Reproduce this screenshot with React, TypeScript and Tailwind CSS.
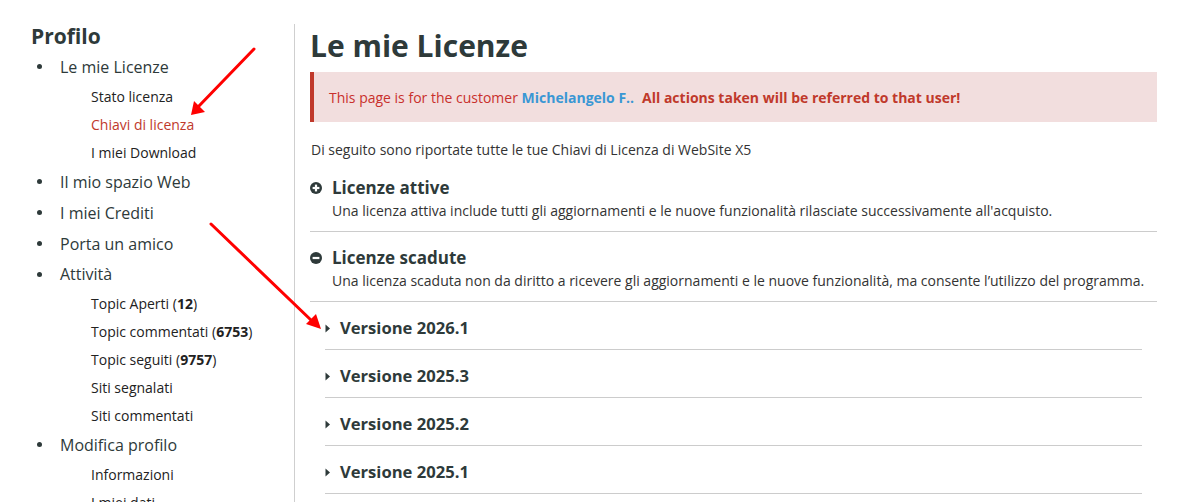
import React from "react";

type SubItem = { label: string; count?: string; active?: boolean };
type NavItem = { label: string; children?: SubItem[] };

const nav: NavItem[] = [
  {
    label: "Le mie Licenze",
    children: [
      { label: "Stato licenza" },
      { label: "Chiavi di licenza", active: true },
      { label: "I miei Download" },
    ],
  },
  { label: "Il mio spazio Web" },
  { label: "I miei Crediti" },
  { label: "Porta un amico" },
  {
    label: "Attività",
    children: [
      { label: "Topic Aperti", count: "12" },
      { label: "Topic commentati", count: "6753" },
      { label: "Topic seguiti", count: "9757" },
      { label: "Siti segnalati" },
      { label: "Siti commentati" },
    ],
  },
  {
    label: "Modifica profilo",
    children: [{ label: "Informazioni" }, { label: "I miei dati" }],
  },
];

const versions = ["Versione 2026.1", "Versione 2025.3", "Versione 2025.2", "Versione 2025.1"];

function CircleIcon({ minus }: { minus?: boolean }) {
  return (
    <svg width="12" height="12" viewBox="0 0 12 12" className="shrink-0">
      <circle cx="6" cy="6" r="6" fill="#2e3a3a" />
      <rect x="2.6" y="4.9" width="6.8" height="2.2" fill="#fff" />
      {!minus && <rect x="4.9" y="2.6" width="2.2" height="6.8" fill="#fff" />}
    </svg>
  );
}

function Caret() {
  return (
    <svg width="6" height="9" viewBox="0 0 6 9" className="shrink-0">
      <path d="M0.5 0.5 L5 4.5 L0.5 8.5 Z" fill="#2e3a3a" />
    </svg>
  );
}

function Sidebar() {
  return (
    <aside className="w-[295px] shrink-0 mt-[24px] border-r border-[#cfcfcf] h-[600px]">
      <h2 className="pl-[31px] h-[24px] leading-[24px] text-[21px] font-bold text-[#2e3a3a]">Profilo</h2>
      <ul className="mt-[3px]">
        {nav.map((item, i) => (
          <li key={item.label}>
            <div className={`flex items-center ${i === 4 ? "h-[30px]" : "h-[31px]"}`}>
              <span className="ml-[37px] w-[5px] h-[5px] rounded-full bg-[#2e3a3a]" />
              <span className="ml-[18px] text-[16px] text-[#2e3a3a]">{item.label}</span>
            </div>
            {item.children && (
              <ul>
                {item.children.map((c) => (
                  <li
                    key={c.label}
                    className={`h-[28px] flex items-center pl-[91px] text-[14px] ${
                      c.active ? "text-[#c0392b]" : "text-[#222]"
                    }`}
                  >
                    <span>
                      {c.label}
                      {c.count && (
                        <>
                          {" ("}
                          <b className="font-bold">{c.count}</b>
                          {")"}
                        </>
                      )}
                    </span>
                  </li>
                ))}
              </ul>
            )}
          </li>
        ))}
      </ul>
    </aside>
  );
}

function Section({ title, text, minus }: { title: string; text: string; minus?: boolean }) {
  return (
    <div className="border-b border-[#cccccc] pb-[10px]">
      <div className="flex items-center h-[22px]">
        <CircleIcon minus={minus} />
        <span className="ml-[10px] text-[17px] font-bold text-[#2e3a3a]">{title}</span>
      </div>
      <p className="mt-[2px] pl-[22px] h-[20px] leading-[20px] text-[14px] text-[#333]">{text}</p>
    </div>
  );
}

export default function App() {
  return (
    <div
      className="relative h-[502px] w-[1191px] overflow-hidden bg-white"
      style={{ fontFamily: '"Open Sans", "Noto Sans", sans-serif' }}
    >
      <div className="flex">
        <Sidebar />
        <main className="pl-[15px] w-[862px] pt-[28px]">
          <h1 className="h-[36px] leading-[36px] text-[30px] font-bold text-[#2e3a3a]">Le mie Licenze</h1>
          <div className="mt-[8px] h-[50px] flex items-center border-l-[4px] border-[#c0392b] bg-[#f2dede] pl-[15px] text-[14px] text-[#c9302c]">
            <span>
              This page is for the customer{" "}
              <b className="font-bold text-[#3a97d4]">Michelangelo F..</b>
              <b className="font-bold text-[#c0392b] ml-[8px]">All actions taken will be referred to that user!</b>
            </span>
          </div>
          <p className="mt-[18px] h-[20px] leading-[20px] text-[14px] text-[#333] pl-px">
            Di seguito sono riportate tutte le tue Chiavi di Licenza di WebSite X5
          </p>
          <div className="mt-[17px] flex flex-col gap-[15px]">
            <Section
              title="Licenze attive"
              text="Una licenza attiva include tutti gli aggiornamenti e le nuove funzionalità rilasciate successivamente all'acquisto."
            />
            <Section
              minus
              title="Licenze scadute"
              text="Una licenza scaduta non da diritto a ricevere gli aggiornamenti e le nuove funzionalità, ma consente l’utilizzo del programma."
            />
          </div>
          <ul className="mx-[15px]">
            {versions.map((v) => (
              <li key={v} className="border-b border-[#cccccc] pt-[15px] pb-[10px]">
                <div className="flex items-center h-[22px]">
                  <Caret />
                  <span className="ml-[9px] text-[16.6px] font-bold text-[#2e3a3a]">{v}</span>
                </div>
              </li>
            ))}
          </ul>
        </main>
      </div>

      {/* annotation arrows drawn over the page */}
      <svg className="absolute inset-0 pointer-events-none" width="1191" height="502">
        <line x1="254" y1="49" x2="198" y2="107" stroke="#ff0000" strokeWidth="3" strokeLinecap="round" />
        <polygon points="191,115 194,101 205,112" fill="#ff0000" />
        <line x1="211" y1="224" x2="312" y2="321" stroke="#ff0000" strokeWidth="3" strokeLinecap="round" />
        <polygon points="321,329 306,324 316,314" fill="#ff0000" />
      </svg>
    </div>
  );
}
